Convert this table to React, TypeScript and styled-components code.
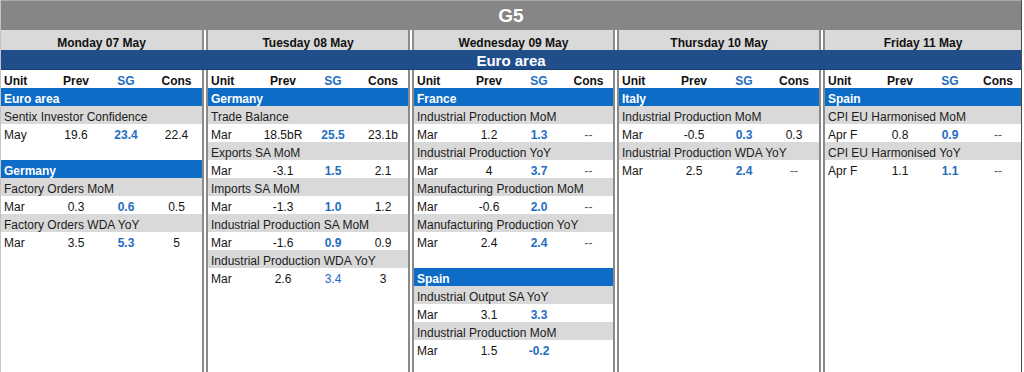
import React from "react";
import styled, { createGlobalStyle } from "styled-components";

const GlobalStyle = createGlobalStyle`
  html, body {
    margin: 0;
    padding: 0;
    background: #ffffff;
  }
  body {
    font-family: "Liberation Sans", Arial, sans-serif;
    color: #111111;
  }
`;

const TEMPLATE = "201px 6px 200px 6px 199px 6px 200px 6px 1fr";

const Sheet = styled.div`
  width: 1022px;
  height: 372px;
  box-sizing: border-box;
  display: flex;
  flex-direction: column;
  border-left: 1px solid #c4c4c4;
  border-right: 1px solid #4a4a4a;
  overflow: hidden;
  background: #ffffff;
`;

const TitleBar = styled.div`
  height: 30px;
  box-sizing: border-box;
  border-top: 1px solid #a9a9a9;
  background: #868686;
  color: #ffffff;
  font-size: 19px;
  font-weight: 700;
  line-height: 29px;
  text-align: center;
`;

const DayRow = styled.div`
  display: grid;
  grid-template-columns: ${TEMPLATE};
  height: 20px;
`;

const DayCell = styled.div`
  box-sizing: border-box;
  background: #d9d9d9;
  font-size: 12px;
  font-weight: 700;
  padding-top: 3px;
  line-height: 20px;
  text-align: center;
  overflow: hidden;
`;

const Separator = styled.div`
  box-sizing: border-box;
  background: #ffffff;
  border-left: 2px solid #8a8a8a;
  border-right: 2px solid #8a8a8a;
`;

const RegionBar = styled.div`
  height: 20px;
  box-sizing: border-box;
  background: #1f4e8b;
  border-bottom: 1px solid #183f72;
  color: #ffffff;
  font-size: 15px;
  font-weight: 700;
  padding-top: 1px;
  line-height: 19px;
  text-align: center;
`;

const Body = styled.div`
  flex: 1;
  display: grid;
  grid-template-columns: ${TEMPLATE};
`;

const Column = styled.div`
  display: flex;
  flex-direction: column;
`;

const Row = styled.div`
  box-sizing: border-box;
  height: 18px;
  padding-top: 2px;
  line-height: 18px;
  font-size: 12px;
  padding-left: 3px;
  white-space: nowrap;
`;

const GridRow = styled(Row)`
  display: grid;
  grid-template-columns: 47px 50px 50px 1fr;
`;

const HeadCell = styled.span<{ $accent?: boolean; $left?: boolean }>`
  font-weight: 700;
  text-align: ${(p) => (p.$left ? "left" : "center")};
  color: ${(p) => (p.$accent ? "#1f6dbf" : "#111111")};
`;

const CountryRow = styled(Row)`
  background: #0d6cc6;
  color: #ffffff;
  font-weight: 700;
`;

const ItemRow = styled(Row)`
  background: #d9d9d9;
  color: #1c1c1c;
`;

const Cell = styled.span<{ $left?: boolean; $muted?: boolean }>`
  text-align: ${(p) => (p.$left ? "left" : "center")};
  color: ${(p) => (p.$muted ? "#555555" : "#151515")};
`;

const SgCell = styled.span<{ $light?: boolean }>`
  text-align: center;
  color: #1f6dbf;
  font-weight: ${(p) => (p.$light ? 400 : 700)};
`;

type Entry =
  | { kind: "country"; name: string }
  | { kind: "item"; name: string }
  | { kind: "value"; unit: string; prev: string; sg: string; cons: string; light?: boolean }
  | { kind: "blank" };

type Day = { label: string; rows: Entry[] };

const c = (name: string): Entry => ({ kind: "country", name });
const i = (name: string): Entry => ({ kind: "item", name });
const v = (unit: string, prev: string, sg: string, cons: string, light?: boolean): Entry => ({
  kind: "value",
  unit,
  prev,
  sg,
  cons,
  light,
});
const blank: Entry = { kind: "blank" };

const days: Day[] = [
  {
    label: "Monday 07 May",
    rows: [
      c("Euro area"),
      i("Sentix Investor Confidence"),
      v("May", "19.6", "23.4", "22.4"),
      blank,
      c("Germany"),
      i("Factory Orders MoM"),
      v("Mar", "0.3", "0.6", "0.5"),
      i("Factory Orders WDA YoY"),
      v("Mar", "3.5", "5.3", "5"),
    ],
  },
  {
    label: "Tuesday 08 May",
    rows: [
      c("Germany"),
      i("Trade Balance"),
      v("Mar", "18.5bR", "25.5", "23.1b"),
      i("Exports SA MoM"),
      v("Mar", "-3.1", "1.5", "2.1"),
      i("Imports SA MoM"),
      v("Mar", "-1.3", "1.0", "1.2"),
      i("Industrial Production SA MoM"),
      v("Mar", "-1.6", "0.9", "0.9"),
      i("Industrial Production WDA YoY"),
      v("Mar", "2.6", "3.4", "3", true),
    ],
  },
  {
    label: "Wednesday 09 May",
    rows: [
      c("France"),
      i("Industrial Production MoM"),
      v("Mar", "1.2", "1.3", "--"),
      i("Industrial Production YoY"),
      v("Mar", "4", "3.7", "--"),
      i("Manufacturing Production MoM"),
      v("Mar", "-0.6", "2.0", "--"),
      i("Manufacturing Production YoY"),
      v("Mar", "2.4", "2.4", "--"),
      blank,
      c("Spain"),
      i("Industrial Output SA YoY"),
      v("Mar", "3.1", "3.3", ""),
      i("Industrial Production MoM"),
      v("Mar", "1.5", "-0.2", ""),
    ],
  },
  {
    label: "Thursday 10 May",
    rows: [
      c("Italy"),
      i("Industrial Production MoM"),
      v("Mar", "-0.5", "0.3", "0.3"),
      i("Industrial Production WDA YoY"),
      v("Mar", "2.5", "2.4", "--"),
    ],
  },
  {
    label: "Friday 11 May",
    rows: [
      c("Spain"),
      i("CPI EU Harmonised MoM"),
      v("Apr F", "0.8", "0.9", "--"),
      i("CPI EU Harmonised YoY"),
      v("Apr F", "1.1", "1.1", "--"),
    ],
  },
];

const renderEntry = (entry: Entry, key: number) => {
  switch (entry.kind) {
    case "country":
      return <CountryRow key={key}>{entry.name}</CountryRow>;
    case "item":
      return <ItemRow key={key}>{entry.name}</ItemRow>;
    case "value":
      return (
        <GridRow key={key}>
          <Cell $left>{entry.unit}</Cell>
          <Cell>{entry.prev}</Cell>
          <SgCell $light={entry.light}>{entry.sg}</SgCell>
          <Cell $muted={entry.cons === "--"}>{entry.cons}</Cell>
        </GridRow>
      );
    default:
      return <Row key={key} />;
  }
};

const withSeparators = (nodes: React.ReactNode[]) =>
  nodes.flatMap((node, idx) =>
    idx === 0 ? [node] : [<Separator key={`sep-${idx}`} />, node]
  );

const App = () => (
  <>
    <GlobalStyle />
    <Sheet>
      <TitleBar>G5</TitleBar>
      <DayRow>
        {withSeparators(days.map((d) => <DayCell key={d.label}>{d.label}</DayCell>))}
      </DayRow>
      <RegionBar>Euro area</RegionBar>
      <Body>
        {withSeparators(
          days.map((d) => (
            <Column key={d.label}>
              <GridRow>
                <HeadCell $left>Unit</HeadCell>
                <HeadCell>Prev</HeadCell>
                <HeadCell $accent>SG</HeadCell>
                <HeadCell>Cons</HeadCell>
              </GridRow>
              {d.rows.map(renderEntry)}
            </Column>
          ))
        )}
      </Body>
    </Sheet>
  </>
);

export default App;
